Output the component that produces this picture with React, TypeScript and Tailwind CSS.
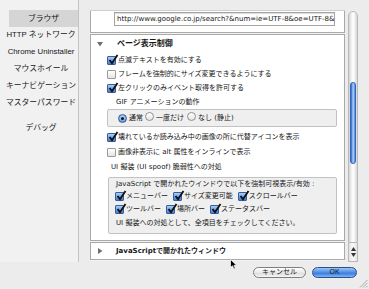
import React from 'react';

function Check({ on }: { on: boolean }) {
  return (
    <span
      className={`relative inline-flex w-[9px] h-[9px] shrink-0 rounded-[1px] border ${
        on ? 'border-[#3a5d9a] bg-[linear-gradient(#a9cdf6,#3f7edb)]' : 'border-[#9a9a9a] bg-[linear-gradient(#ffffff,#e4e4e4)]'
      }`}
    >
      {on && (
        <svg className="absolute -top-[3px] left-0" width="11" height="11" viewBox="0 0 11 11">
          <path d="M1.5 6 L4 9.2 L9.5 1" fill="none" stroke="#111" strokeWidth="1.9" />
        </svg>
      )}
    </span>
  );
}

function Radio({ on }: { on: boolean }) {
  return (
    <span
      className={`inline-flex w-[9px] h-[9px] shrink-0 items-center justify-center rounded-full border ${
        on ? 'border-[#3a5d9a] bg-[radial-gradient(circle_at_50%_35%,#cfe3fb,#3f7edb)]' : 'border-[#8f8f8f] bg-[linear-gradient(#ffffff,#e4e4e4)]'
      }`}
    >
      {on && <span className="w-[3px] h-[3px] rounded-full bg-[#111]" />}
    </span>
  );
}

function CheckItem({ on, label }: { on: boolean; label: string }) {
  return (
    <span className="flex items-center gap-[2px] whitespace-nowrap">
      <Check on={on} />
      <span>{label}</span>
    </span>
  );
}

function Tri({ open }: { open: boolean }) {
  return (
    <svg width="6" height="6" viewBox="0 0 6 6" className="shrink-0">
      {open ? <path d="M0 1 L6 1 L3 5.5 Z" fill="#6f6f6f" /> : <path d="M1 0 L5.5 3 L1 6 Z" fill="#6f6f6f" />}
    </svg>
  );
}

const menu = ['ブラウザ', 'HTTP ネットワーク', 'Chrome Uninstaller', 'マウスホイール', 'キーナビゲーション', 'マスターパスワード'];

export default function App() {
  return (
    <div className="relative w-[369px] h-[289px] overflow-hidden bg-[#ececec] text-[#161616] font-['DejaVu_Sans','Noto_Sans_CJK_JP',sans-serif] text-[7px]">
      <div className="flex h-[262px]">
        {/* sidebar */}
        <div className="w-[79px] shrink-0 border-r border-[#c4c4c4] bg-[#f1f1f1] pt-[10px] flex flex-col font-['Liberation_Sans','Noto_Sans_CJK_JP',sans-serif] text-[7.8px]">
          {menu.map((m, i) => (
            <div
              key={m}
              className={`h-[16.8px] flex items-center justify-center whitespace-nowrap ${i === 0 ? 'ml-[9px] bg-[#d5d5d5]' : 'pl-[4px]'}`}
            >
              {m}
            </div>
          ))}
          <div className="mt-[8.8px] h-[16.8px] pl-[4px] flex items-center justify-center">デバッグ</div>
        </div>

        {/* scroll view */}
        <div className="ml-[11px] mt-[10px] w-[255px] h-[251px] overflow-hidden flex flex-col gap-[1px] bg-[#f3f3f3] border-t border-[#d0d0d0]">
          <div className="h-[22px] shrink-0 bg-white border-x border-b border-[#a9a9a9] pl-[23px] pt-[1px]">
            <div className="w-[221px] h-[14px] border border-[#a4a4a4] bg-white pl-[2px] flex items-center overflow-hidden whitespace-nowrap shadow-[inset_0_1px_1px_rgba(0,0,0,0.15)]">
              http://www.google.co.jp/search?&num=ie=UTF-8&oe=UTF-8&
            </div>
          </div>

          <div className="shrink-0 bg-white border border-[#a9a9a9] pb-[6px]">
            <div className="h-[18px] flex items-center pl-[6px]">
              <Tri open />
              <span className="ml-[14px] font-bold text-[8px]">ページ表示制御</span>
            </div>
            <div className="h-[14px] flex items-center pl-[16px]"><CheckItem on label="点滅テキストを有効にする" /></div>
            <div className="h-[14px] flex items-center pl-[16px]"><CheckItem on={false} label="フレームを強制的にサイズ変更できるようにする" /></div>
            <div className="h-[14px] flex items-center pl-[16px]"><CheckItem on label="左クリックのみイベント取得を許可する" /></div>
            <div className="h-[14px] flex items-center pl-[25px]">GIF アニメーションの動作</div>
            <div className="ml-[16px] w-[230px] h-[18px] rounded-[2px] border border-[#c2c2c2] bg-[#efefef] flex items-center pl-[10px] whitespace-nowrap">
              <Radio on />
              <span className="ml-[2px]">通常</span>
              <span className="ml-[2px]"><Radio on={false} /></span>
              <span className="ml-[2px]">一度だけ</span>
              <span className="ml-[3px]"><Radio on={false} /></span>
              <span className="ml-[2px]">なし (静止)</span>
            </div>
            <div className="mt-[3px] h-[15px] flex items-center pl-[16px]"><CheckItem on label="壊れているか読み込み中の画像の所に代替アイコンを表示" /></div>
            <div className="h-[15px] flex items-center pl-[16px]"><CheckItem on={false} label="画像非表示に alt 属性をインラインで表示" /></div>
            <div className="h-[14px] flex items-center pl-[20px]">UI 擬装 (UI spoof) 脆弱性への対処</div>
            <div className="mt-[3px] ml-[17px] w-[229px] rounded-[2px] border border-[#c2c2c2] bg-[#efefef] pt-[1px] pb-[2px]">
              <div className="h-[11px] flex items-center pl-[7px] whitespace-nowrap">JavaScript で開かれたウインドウで以下を強制可視表示/有効 :</div>
              <div className="h-[13px] flex items-center gap-[5px] pl-[6px]">
                <CheckItem on label="メニューバー" />
                <CheckItem on label="サイズ変更可能" />
                <CheckItem on label="スクロールバー" />
              </div>
              <div className="h-[13px] flex items-center gap-[5px] pl-[6px]">
                <CheckItem on label="ツールバー" />
                <CheckItem on label="場所バー" />
                <CheckItem on label="ステータスバー" />
              </div>
              <div className="h-[15px] flex items-center pl-[7px] whitespace-nowrap">UI 擬装への対処として、全項目をチェックしてください。</div>
            </div>
          </div>

          <div className="h-[18px] shrink-0 bg-white border border-[#a9a9a9] flex items-center pl-[6px]">
            <Tri open={false} />
            <span className="ml-[13px] font-bold">JavaScriptで開かれたウィンドウ</span>
          </div>
        </div>

        {/* scrollbar */}
        <div className="ml-[3px] mt-[11px] w-[10px] h-[251px] flex flex-col">
          <div className="flex-1 rounded-t-full border border-[#b9b9b9] bg-[linear-gradient(to_right,#d2d2d2,#fbfbfb_40%,#fbfbfb_60%,#d6d6d6)] px-[1px]">
            <div className="mt-[70px] h-[82px] rounded-full border border-[#3563b8] bg-[linear-gradient(to_right,#2b5fc6,#78acef_35%,#b3d3f8_55%,#4b86de)]" />
          </div>
          <div className="h-[19px] border-x border-b border-[#b9b9b9] bg-[linear-gradient(to_right,#e2e2e2,#fbfbfb,#e2e2e2)] flex flex-col items-center justify-center gap-[2px]">
            <svg width="5" height="4" viewBox="0 0 5 4"><path d="M2.5 0 L5 4 L0 4 Z" fill="#333" /></svg>
            <svg width="5" height="4" viewBox="0 0 5 4"><path d="M0 0 L5 0 L2.5 4 Z" fill="#333" /></svg>
          </div>
        </div>
      </div>

      {/* buttons */}
      <div className="mt-[5px] flex justify-end gap-[6px] pr-[12px] font-['Liberation_Sans','Noto_Sans_CJK_JP',sans-serif]">
        <div className="w-[53px] h-[11px] rounded-full border border-[#7d7d7d] bg-[linear-gradient(#ffffff,#e9e9e9_50%,#d9d9d9_51%,#f6f6f6)] flex items-center justify-center text-[7px]">
          キャンセル
        </div>
        <div className="w-[45px] h-[11px] rounded-full border border-[#2c4f93] bg-[linear-gradient(#9cc6f5,#4a8ce5_50%,#2f74d9_51%,#7fb6f3)] flex items-center justify-center text-[7px]">
          OK
        </div>
      </div>

      {/* mouse pointer */}
      <svg className="absolute left-[230px] top-[259px]" width="8" height="11" viewBox="0 0 8 11">
        <path d="M0.5 0.5 L0.5 8.5 L2.5 6.8 L4 10 L5.3 9.4 L3.9 6.3 L6.6 6.3 Z" fill="#000" stroke="#fff" strokeWidth="0.7" />
      </svg>

      {/* resize grip */}
      <svg className="absolute right-[1px] bottom-[1px]" width="9" height="9" viewBox="0 0 9 9">
        <path d="M8.5 1 L1 8.5 M8.5 4 L4 8.5 M8.5 7 L7 8.5" stroke="#9a9a9a" strokeWidth="0.8" />
      </svg>
    </div>
  );
}
